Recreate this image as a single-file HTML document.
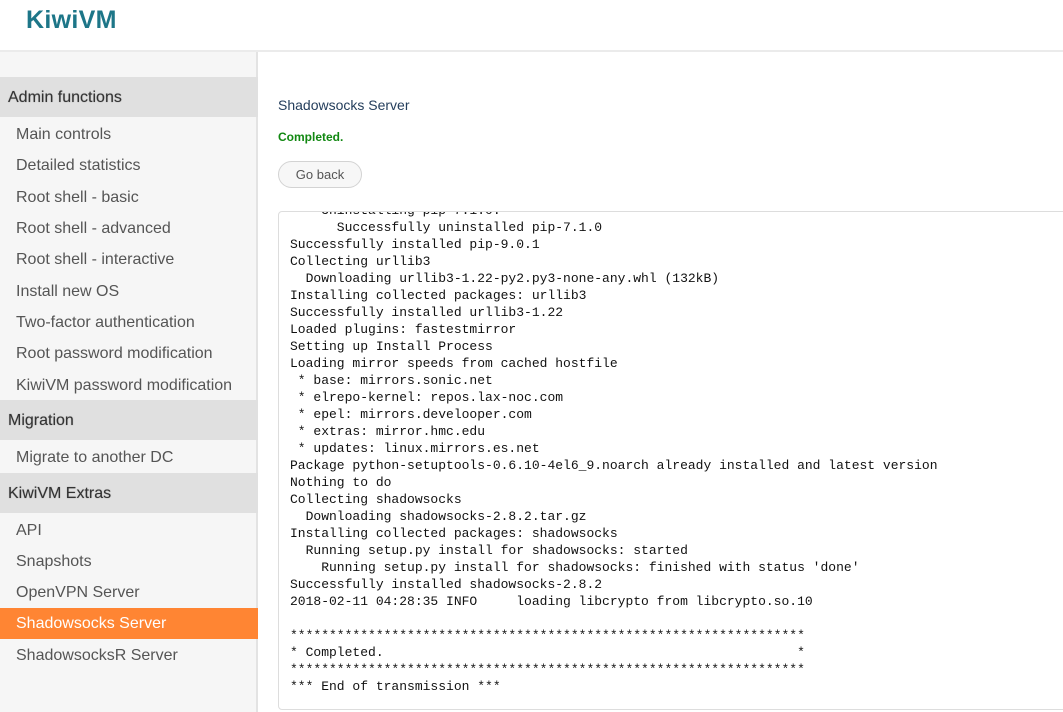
<!DOCTYPE html>
<html><head><meta charset="utf-8"><style>
*{margin:0;padding:0;box-sizing:border-box}
body{width:1063px;height:712px;overflow:hidden;background:#fff;font-family:"Liberation Sans",sans-serif;position:relative}
.hdr{position:absolute;left:0;top:0;width:1063px;height:52px;border-bottom:2px solid #ebebeb}
.logo{position:absolute;left:26px;top:6px;font-size:25px;font-weight:bold;color:#1d7688;letter-spacing:0.3px}
.side{position:absolute;left:0;top:52px;width:258px;height:660px;background:#f6f6f6;border-right:2px solid #e3e3e3}
.h{position:absolute;left:0;width:258px;height:40px;background:#e0e0e0;color:#333;font-size:16px;line-height:41px;padding-left:8px;text-shadow:0 0 1px #888}
.i{position:absolute;left:0;width:258px;height:31px;line-height:33px;padding-left:16px;font-size:16px;color:#555}
.a{background:#ff8533;color:#fff;line-height:31px}
.title{position:absolute;left:278px;top:97px;font-size:14px;color:#243e5c}
.ok{position:absolute;left:278px;top:130px;font-size:12px;font-weight:bold;color:#118811}
.btn{position:absolute;left:278px;top:161px;width:84px;height:27px;border:1px solid #d3d3d3;border-radius:14px;background:#f7f7f7;font-size:13px;color:#555;text-align:center;line-height:25px}
.box{position:absolute;left:278px;top:211px;width:800px;height:499px;border:1px solid #ddd;border-radius:4px;overflow:hidden}
pre{position:absolute;left:11px;top:-10px;font-family:"Liberation Mono",monospace;font-size:13px;line-height:17px;color:#111}
</style></head><body>
<div class="hdr"><div class="logo">KiwiVM</div></div>
<div class="side">
<div class="h" style="top:25px">Admin functions</div>
<div class="i" style="top:66px">Main controls</div>
<div class="i" style="top:97px">Detailed statistics</div>
<div class="i" style="top:129px">Root shell - basic</div>
<div class="i" style="top:160px">Root shell - advanced</div>
<div class="i" style="top:191px">Root shell - interactive</div>
<div class="i" style="top:223px">Install new OS</div>
<div class="i" style="top:254px">Two-factor authentication</div>
<div class="i" style="top:285px">Root password modification</div>
<div class="i" style="top:317px">KiwiVM password modification</div>
<div class="h" style="top:348px">Migration</div>
<div class="i" style="top:389px">Migrate to another DC</div>
<div class="h" style="top:421px">KiwiVM Extras</div>
<div class="i" style="top:462px">API</div>
<div class="i" style="top:493px">Snapshots</div>
<div class="i" style="top:524px">OpenVPN Server</div>
<div class="i a" style="top:556px">Shadowsocks Server</div>
<div class="i" style="top:587px">ShadowsocksR Server</div>
</div>
<div class="title">Shadowsocks Server</div>
<div class="ok">Completed.</div>
<div class="btn">Go back</div>
<div class="box"><pre>    Uninstalling pip-7.1.0:
      Successfully uninstalled pip-7.1.0
Successfully installed pip-9.0.1
Collecting urllib3
  Downloading urllib3-1.22-py2.py3-none-any.whl (132kB)
Installing collected packages: urllib3
Successfully installed urllib3-1.22
Loaded plugins: fastestmirror
Setting up Install Process
Loading mirror speeds from cached hostfile
 * base: mirrors.sonic.net
 * elrepo-kernel: repos.lax-noc.com
 * epel: mirrors.develooper.com
 * extras: mirror.hmc.edu
 * updates: linux.mirrors.es.net
Package python-setuptools-0.6.10-4el6_9.noarch already installed and latest version
Nothing to do
Collecting shadowsocks
  Downloading shadowsocks-2.8.2.tar.gz
Installing collected packages: shadowsocks
  Running setup.py install for shadowsocks: started
    Running setup.py install for shadowsocks: finished with status 'done'
Successfully installed shadowsocks-2.8.2
2018-02-11 04:28:35 INFO     loading libcrypto from libcrypto.so.10

******************************************************************
* Completed.                                                     *
******************************************************************
*** End of transmission ***</pre></div>
</body></html>
